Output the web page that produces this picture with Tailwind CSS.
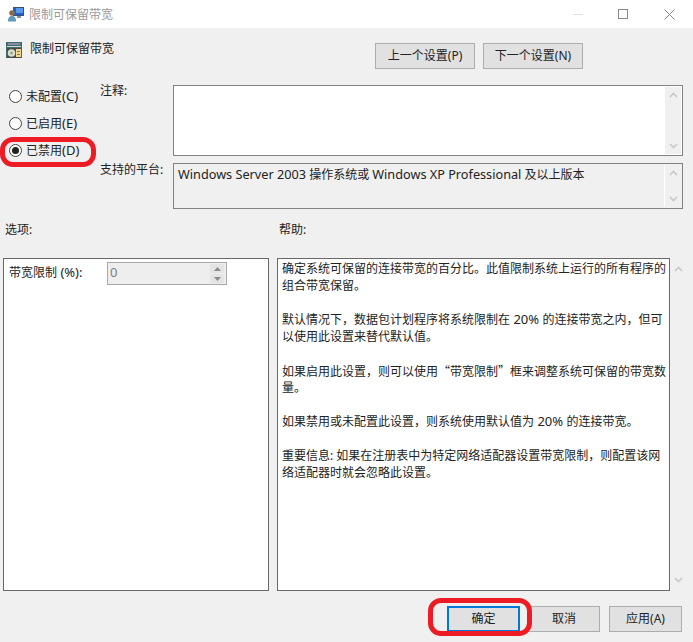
<!DOCTYPE html>
<html lang="zh"><head><meta charset="utf-8">
<script src="https://cdn.jsdelivr.net/npm/@tailwindcss/browser@4"></script>
</head>
<body class="m-0 bg-white">
<div class="relative w-[693px] h-[642px] overflow-hidden bg-[#f0f0f0] text-[12px] leading-[17px] text-[#222] font-['Noto_Sans','Noto_Sans_CJK_SC',sans-serif]">
  <!-- title bar -->
  <div class="h-[28px] bg-white flex items-center pl-[8px]">
    <svg width="16" height="16" viewBox="0 0 16 16" class="shrink-0 mr-[5px]"><rect x="5" y="1" width="11" height="9" fill="#3d4f78"/><rect x="6" y="2" width="9" height="7" fill="#1f5fd0"/><rect x="8" y="2" width="7" height="5" fill="#5a9ae8"/><rect x="9" y="10" width="4" height="2" fill="#8a8f98"/><circle cx="4" cy="7" r="2.800" fill="#8a6a4a"/><path d="M0 15.500c0-4 1.500-5.500 4-5.500s4 1.500 4 5.500z" fill="#5f9ab8"/></svg>
    <span class="text-[#9a9a9a] mt-[1px]">限制可保留带宽</span>
    <div class="ml-auto flex items-center h-full mr-[18px] gap-[35px]">
      <div class="w-[10px] h-px bg-[#e3e3e3]"></div>
      <div class="w-[10px] h-[10px] border border-[#8a8a8a]"></div>
      <svg width="11" height="11" viewBox="0 0 11 11" class="ml-px"><path d="M.5.5l10 10M10.500.5l-10 10" stroke="#8a8a8a" fill="none"/></svg>
    </div>
  </div>

  <!-- header row -->
  <div class="h-[57px] flex items-start pl-[6px] pt-[12px]">
    <svg width="16" height="16" viewBox="0 0 16 16" class="shrink-0 mt-[2px] mr-[8px]"><rect width="16" height="16" fill="#3f6f6c"/><rect x="2" y="1" width="12" height="2" fill="#8f86a8"/><rect x="1" y="4" width="14" height="1" fill="#d8d8d0"/><rect x="1" y="6" width="14" height="10" fill="#4a4a48"/><circle cx="5.500" cy="11" r="3.800" fill="#d8dcd0"/><circle cx="5.500" cy="11" r="1.200" fill="#8a9a58"/><rect x="10" y="7" width="5" height="8" fill="#f0d890"/><rect x="11" y="9" width="3" height="1" fill="#8a7a4a"/><rect x="11" y="12" width="3" height="1" fill="#8a7a4a"/></svg>
    <span>限制可保留带宽</span>
    <div class="ml-[261px] mt-[3px] flex gap-[8px]">
      <div class="w-[100px] h-[26px] pb-[2px] border border-[#adadad] bg-[#e1e1e1] flex items-center justify-center">上一个设置(P)</div>
      <div class="w-[100px] h-[26px] pb-[2px] border border-[#adadad] bg-[#e1e1e1] flex items-center justify-center">下一个设置(N)</div>
    </div>
  </div>

  <!-- settings row -->
  <div class="h-[124px] flex">
    <div class="w-[100px] pl-[9px] pt-[3px] flex flex-col gap-[10px]">
      <div class="h-[17px] flex items-center gap-[4px]"><span class="w-[13px] h-[13px] rounded-full border border-[#444] bg-white"></span><span>未配置<span class="text-[13px]">(C)</span></span></div>
      <div class="h-[17px] flex items-center gap-[4px]"><span class="w-[13px] h-[13px] rounded-full border border-[#444] bg-white"></span><span>已启用<span class="text-[13px]">(E)</span></span></div>
      <div class="h-[17px] flex items-center gap-[4px]"><span class="w-[13px] h-[13px] rounded-full border border-[#444] bg-white flex items-center justify-center"><span class="w-[7px] h-[7px] rounded-full bg-[#222]"></span></span><span>已禁用<span class="text-[13px]">(D)</span></span></div>
    </div>
    <div class="w-[73px] flex flex-col">
      <div class="h-[78px] mt-[-3px]">注释:</div>
      <div class="mt-[1px]">支持的平台:</div>
    </div>
    <div class="w-[510px] flex flex-col gap-[7px]">
      <div class="h-[71px] border border-[#828282] bg-white flex justify-end p-[1px]">
        <div class="w-[16px] bg-[#f0f0f0] flex flex-col justify-between items-center py-[5px]">
          <svg width="9" height="6" viewBox="0 0 9 6"><path d="M1 5l3.500-3.500L8 5" stroke="#c8c8c8" stroke-width="1.600" fill="none"/></svg>
          <svg width="9" height="6" viewBox="0 0 9 6"><path d="M1 1l3.500 3.500L8 1" stroke="#c8c8c8" stroke-width="1.600" fill="none"/></svg>
        </div>
      </div>
      <div class="h-[46px] border border-[#828282] bg-[#f0f0f0] flex justify-between p-[1px]">
        <div class="pl-[3px] pt-[1px]"><span class="text-[12.7px]">Windows Server 2003</span> 操作系统或 <span class="text-[12.7px]">Windows XP Professional</span> 及以上版本</div>
        <div class="w-[17px] border-l border-white flex flex-col justify-between items-center py-[5px]">
          <svg width="9" height="6" viewBox="0 0 9 6"><path d="M1 5l3.500-3.500L8 5" stroke="#c8c8c8" stroke-width="1.600" fill="none"/></svg>
          <svg width="9" height="6" viewBox="0 0 9 6"><path d="M1 1l3.500 3.500L8 1" stroke="#c8c8c8" stroke-width="1.600" fill="none"/></svg>
        </div>
      </div>
    </div>
  </div>

  <!-- labels -->
  <div class="h-[49px] flex pt-[12px]">
    <div class="w-[279px] pl-[5px]">选项:</div>
    <div>帮助:</div>
  </div>

  <!-- panels -->
  <div class="h-[333px] flex pl-[3px]">
    <div class="w-[266px] h-[333px] border border-[#696969] bg-white pl-[5px] pt-[3px]">
      <div class="flex items-start">
        <span class="w-[98px] mt-[2px] h-[17px] whitespace-nowrap">带宽限制<span class="text-[13px]"> (%):</span></span>
        <div class="w-[120px] h-[23px] border border-[#a8a8a8] bg-[#eeeeee] flex justify-between p-[1px] text-[#7d7d7d] text-[13px]">
          <span class="pl-[1px]">0</span>
          <div class="w-[14px] flex flex-col gap-px mr-px">
            <div class="h-[9px] bg-[#e4e4e4] flex items-center justify-center"><svg width="7" height="4" viewBox="0 0 7 4"><path d="M0 4l3.500-4L7 4z" fill="#8a8a8a"/></svg></div>
            <div class="h-[9px] bg-[#e4e4e4] flex items-center justify-center"><svg width="7" height="4" viewBox="0 0 7 4"><path d="M0 0l3.500 4L7 0z" fill="#8a8a8a"/></svg></div>
          </div>
        </div>
      </div>
    </div>
    <div class="ml-[8px] w-[393px] h-[333px] border border-[#696969] bg-white pl-[4px] pt-[1px] whitespace-nowrap">
      <div class="h-[17px]">确定系统可保留的连接带宽的百分比。此值限制系统上运行的所有程序的</div>
      <div class="h-[17px]">组合带宽保留。</div>
      <div class="h-[17px]"></div>
      <div class="h-[17px]">默认情况下，数据包计划程序将系统限制在<span class="text-[13px]"> 20% </span>的连接带宽之内，但可</div>
      <div class="h-[17px]">以使用此设置来替代默认值。</div>
      <div class="h-[17px]"></div>
      <div class="h-[17px]">如果启用此设置，则可以使用<span class="font-['Noto_Sans_CJK_SC']">“</span>带宽限制<span class="font-['Noto_Sans_CJK_SC']">”</span>框来调整系统可保留的带宽数</div>
      <div class="h-[17px]">量。</div>
      <div class="h-[17px]"></div>
      <div class="h-[17px]">如果禁用或未配置此设置，则系统使用默认值为<span class="text-[13px]"> 20% </span>的连接带宽。</div>
      <div class="h-[17px]"></div>
      <div class="h-[17px]">重要信息: 如果在注册表中为特定网络适配器设置带宽限制，则配置该网</div>
      <div class="h-[17px]">络适配器时就会忽略此设置。</div>
    </div>
    <div class="w-[16px] flex flex-col justify-between items-center py-[8px]">
      <svg width="9" height="6" viewBox="0 0 9 6"><path d="M1 5l3.500-3.500L8 5" stroke="#c8c8c8" stroke-width="1.600" fill="none"/></svg>
      <svg width="9" height="6" viewBox="0 0 9 6"><path d="M1 1l3.500 3.500L8 1" stroke="#c8c8c8" stroke-width="1.600" fill="none"/></svg>
    </div>
  </div>

  <!-- footer -->
  <div class="flex justify-end pt-[15px] pr-[11px]">
    <div class="w-[73px] h-[26px] pb-[2px] mr-[8px] border-2 border-[#0078d7] bg-[#e1e1e1] flex items-center justify-center">确定</div>
    <div class="w-[72px] h-[26px] pb-[2px] mr-[9px] border border-[#adadad] bg-[#e1e1e1] flex items-center justify-center">取消</div>
    <div class="w-[73px] h-[26px] pb-[2px] border border-[#adadad] bg-[#e1e1e1] flex items-center justify-center">应用(A)</div>
  </div>

  <!-- red annotations -->
  <div class="absolute left-0 top-[137px] w-[96px] h-[30px] border-[5px] border-[#ed1c24] rounded-[13px]"></div>
  <div class="absolute left-[428px] top-[598px] w-[104px] h-[38px] border-[5px] border-[#ed1c24] rounded-[13px]"></div>
</div>
</body></html>
